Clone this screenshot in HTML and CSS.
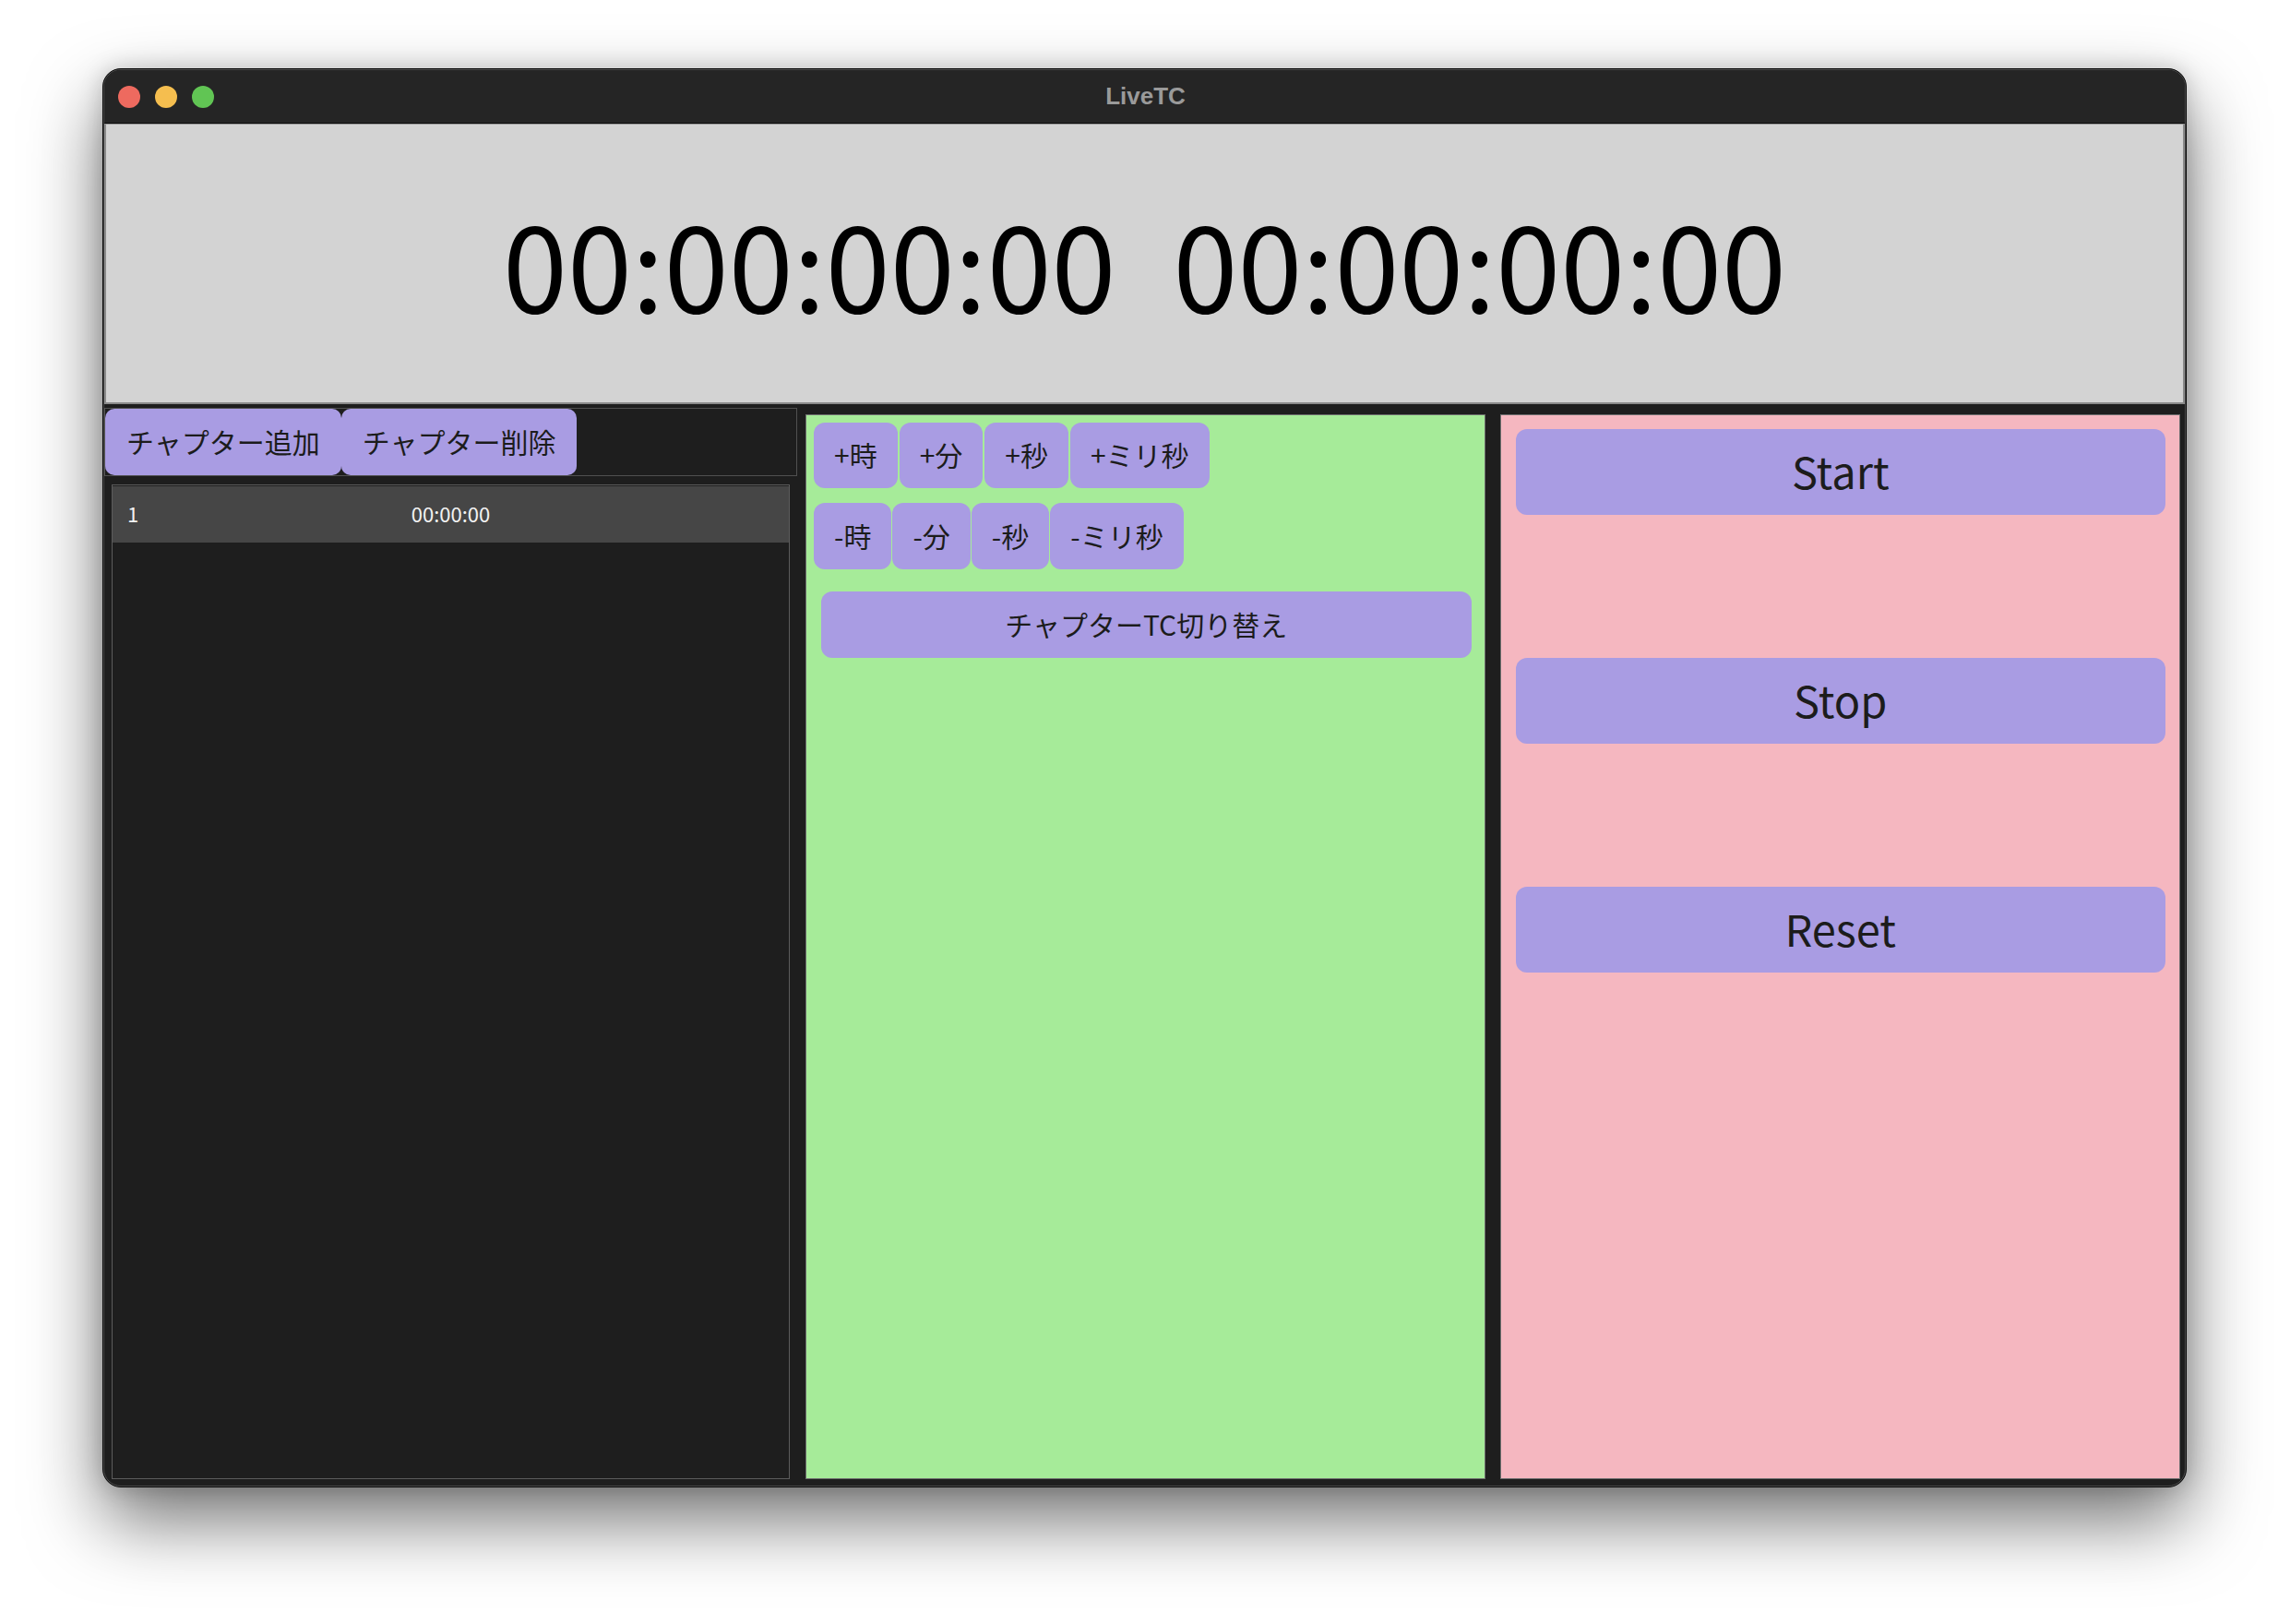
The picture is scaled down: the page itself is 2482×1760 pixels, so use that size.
FILE: index.html
```html
<!DOCTYPE html>
<html lang="ja">
<head>
<meta charset="utf-8">
<title>LiveTC</title>
<link rel="stylesheet" href="styles.css">
</head>
<body>
<div class="window">
  <div class="frame">
    <header class="titlebar">
      <div class="lights">
        <span class="light red"></span>
        <span class="light yellow"></span>
        <span class="light green"></span>
      </div>
      <div class="title">LiveTC</div>
    </header>
    <section class="clock">
      <span class="tc">00:00:00:00</span>
      <span class="tc">00:00:00:00</span>
    </section>
    <main class="main">
      <div class="col-left">
        <div class="toolbar">
          <button class="btn tool">チャプター追加</button>
          <button class="btn tool">チャプター削除</button>
        </div>
        <div class="list">
          <div class="row">
            <span class="row-no">1</span>
            <span class="row-time">00:00:00</span>
          </div>
        </div>
      </div>
      <div class="panel panel-green">
        <div class="btn-row row-plus">
          <button class="btn small">+時</button>
          <button class="btn small">+分</button>
          <button class="btn small">+秒</button>
          <button class="btn small">+ミリ秒</button>
        </div>
        <div class="btn-row row-minus">
          <button class="btn small">-時</button>
          <button class="btn small">-分</button>
          <button class="btn small">-秒</button>
          <button class="btn small">-ミリ秒</button>
        </div>
        <button class="btn wide">チャプターTC切り替え</button>
      </div>
      <div class="panel panel-pink">
        <button class="btn big">Start</button>
        <button class="btn big">Stop</button>
        <button class="btn big">Reset</button>
      </div>
    </main>
  </div>
</div>
</body>
</html>
```

FILE: styles.css
```css
* { box-sizing: border-box; }

html, body {
  margin: 0;
  padding: 0;
  background: #ffffff;
}

body {
  width: 2482px;
  height: 1760px;
  padding: 74px 0 0 111px;
  font-family: "Noto Sans CJK JP", "Noto Sans", sans-serif;
  overflow: hidden;
}

.window {
  width: 2259px;
  height: 1538px;
  border: 1px solid #050505;
  border-radius: 20px;
  background: #1e1e1e;
  box-shadow: 0 36px 80px rgba(0, 0, 0, 0.55), 0 0 24px rgba(0, 0, 0, 0.18);
}

.frame {
  height: 100%;
  border: 1px solid #4c4c4c;
  border-radius: 19px;
  overflow: hidden;
  display: flex;
  flex-direction: column;
}

.titlebar {
  height: 58px;
  flex: none;
  background: #252525;
  border-bottom: 1px solid #0c0c0c;
  display: grid;
  grid-template-columns: 1fr;
  align-items: center;
}

.lights {
  grid-area: 1 / 1;
  display: flex;
  gap: 16px;
  padding-left: 15px;
}

.light {
  width: 24px;
  height: 24px;
  border-radius: 50%;
}
.light.red { background: #ee6a5f; }
.light.yellow { background: #f5be4f; }
.light.green { background: #61c554; }

.title {
  grid-area: 1 / 1;
  justify-self: center;
  font-family: "Liberation Sans", "Noto Sans", sans-serif;
  font-weight: bold;
  font-size: 26px;
  color: #9a9a9a;
  margin-left: 2px;
}

.clock {
  height: 304px;
  flex: none;
  background: #d3d3d3;
  border: 2px solid #8a8a8a;
  border-top: 1px solid #9a9a9a;
  display: flex;
  justify-content: center;
  align-items: center;
  gap: 62px;
  padding-bottom: 4px;
}

.tc {
  font-size: 126px;
  line-height: 1;
  color: #000;
}

.main {
  flex: 1;
  display: flex;
  align-items: stretch;
  padding: 4px 5px 7px 0;
}

.col-left {
  width: 751px;
  flex: none;
  display: flex;
  flex-direction: column;
}

.toolbar {
  height: 74px;
  border: 1px solid #505050;
  background: #1e1e1e;
  display: flex;
}

.btn {
  font-family: "Noto Sans CJK JP", "Noto Sans", sans-serif;
  border: none;
  background: #a99ce3;
  color: #1c1c1c;
  margin: 0;
  padding-bottom: 4px;
  cursor: default;
}

.tool {
  height: 72px;
  padding-left: 23px;
  padding-right: 23px;
  font-size: 30px;
  border-radius: 10px;
}

.list {
  flex: 1;
  margin: 9px 8px 0 8px;
  border: 1px solid #5c5c5c;
  background: #1e1e1e;
  padding-top: 1px;
}

.row {
  height: 61px;
  background: #464646;
  display: grid;
  align-items: center;
  color: #f2f2f2;
  font-size: 22px;
  padding-bottom: 4px;
}

.row-no {
  grid-area: 1 / 1;
  justify-self: start;
  padding-left: 16px;
}

.row-time {
  grid-area: 1 / 1;
  justify-self: center;
}

.panel {
  margin-top: 7px;
  border: 1px solid #6e6e6e;
  display: flex;
  flex-direction: column;
}

.panel-green {
  width: 737px;
  margin-left: 9px;
  background: #a6eb99;
  padding: 8px 14px 0 8px;
}

.panel-pink {
  width: 738px;
  margin-left: 16px;
  background: #f5b7c0;
  padding: 15px 15px 0 16px;
  gap: 155px;
}

.btn-row {
  display: flex;
  gap: 2px;
}

.row-plus .small { height: 71px; padding-left: 22px; padding-right: 22px; }
.row-minus { margin-top: 16px; gap: 1px; }
.row-minus .small { height: 72px; padding-left: 22px; padding-right: 22px; }

.small {
  font-size: 30px;
  border-radius: 12px;
}

.wide {
  margin: 24px 0 0 8px;
  height: 72px;
  font-size: 30px;
  border-radius: 12px;
}

.big {
  height: 93px;
  font-size: 47px;
  border-radius: 12px;
  flex: none;
  padding-bottom: 6px;
}
```
